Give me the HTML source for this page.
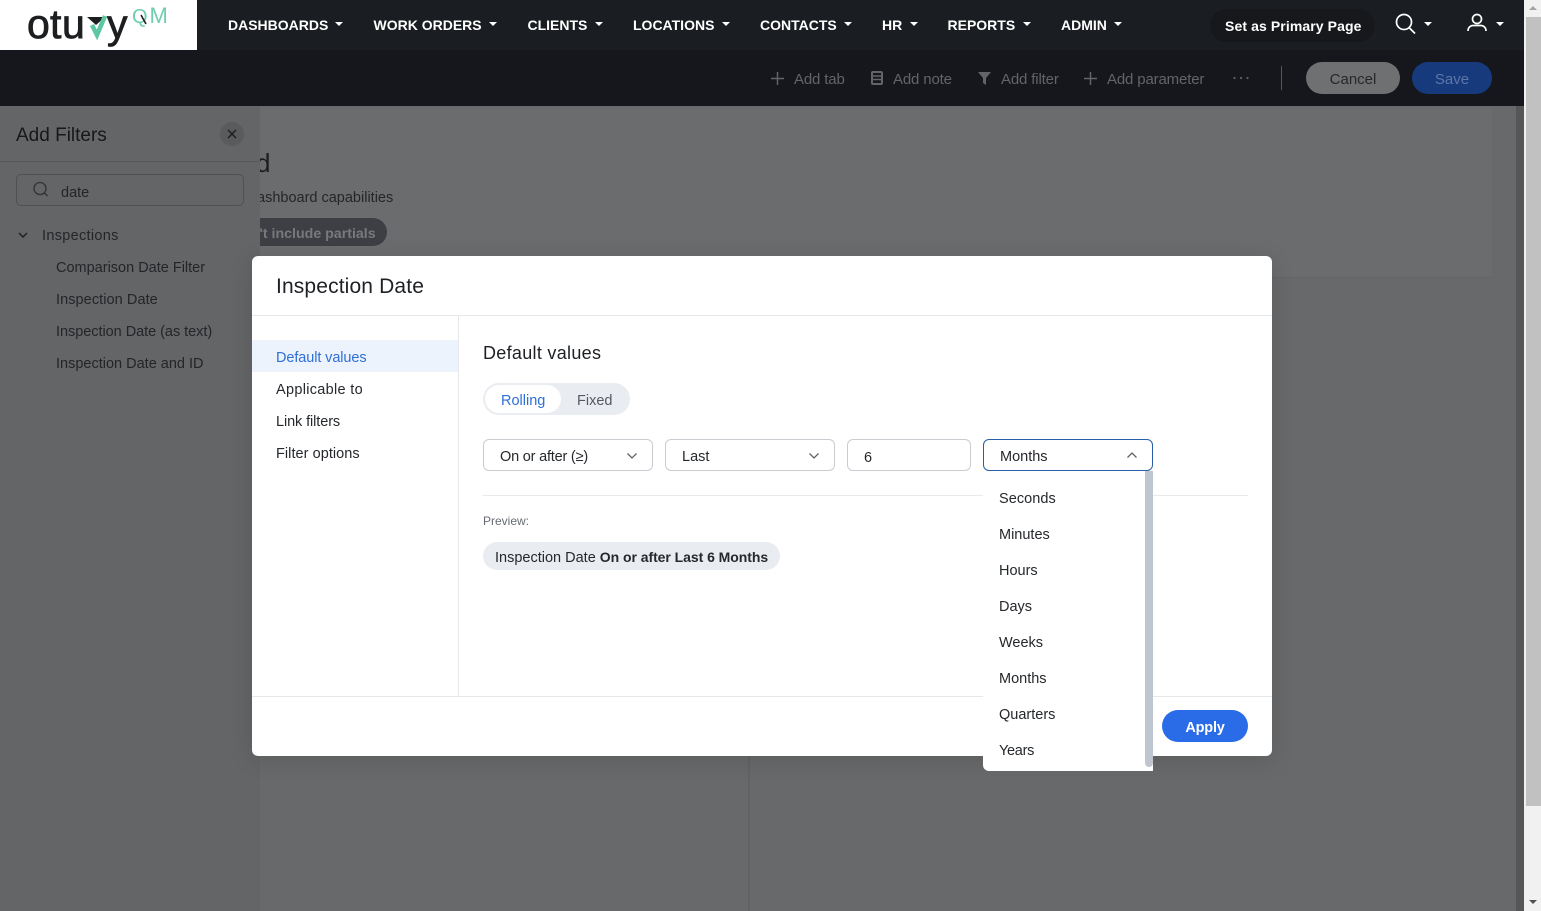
<!DOCTYPE html>
<html><head><meta charset="utf-8"><title>Inspection Date</title>
<style>
html,body{margin:0;padding:0;width:1541px;height:911px;overflow:hidden;background:#68696a;font-family:"Liberation Sans",sans-serif}
.a{position:absolute}
.t{position:absolute;white-space:nowrap;line-height:20px;height:20px}
.nav{font-weight:700;font-size:14px;color:#fff;top:15px}
.car{position:absolute;top:22px;width:0;height:0;border-left:4px solid transparent;border-right:4px solid transparent;border-top:4px solid #fff}
.tb{font-size:15px;color:#626467;top:70px;letter-spacing:-.15px}
.m{font-size:14.5px;color:#25282c}
.sb{font-size:14.5px;color:#232528}
.box{position:absolute;top:439px;height:30px;background:#fff;border:1px solid #c9cdd2;border-radius:6px}
.opt{font-size:14.5px;color:#25282c;left:999px}
.lg{position:absolute;white-space:nowrap;top:2px;height:44px;line-height:44px;font-size:41px;color:#1c1e20;-webkit-text-stroke:.8px #1c1e20}
svg{position:absolute;overflow:visible}
</style></head><body>
<!-- underlying page -->
<div class="a" style="left:260px;top:106px;width:1256px;height:805px;background:#68696a"></div>
<div class="a" style="left:260px;top:108px;width:1232px;height:169px;background:#6b6c6d;border-bottom:1px solid #646566"></div>
<div class="a" style="left:748px;top:756px;width:2px;height:155px;background:#626464"></div>
<div class="a" style="left:1516px;top:106px;width:8px;height:805px;background:#545657"></div>
<div class="t" style="left:256px;top:150px;font-size:26px;line-height:26px;height:26px;color:#1c1e21">d</div>
<div class="t" style="left:257px;top:188px;font-size:14.5px;color:#242629">ashboard capabilities</div>
<div class="a" style="left:240px;top:218px;width:147px;height:28px;border-radius:14px;background:#3d3f44"></div>
<div class="t" style="left:259.500px;top:224px;font-size:14.2px;font-weight:700;color:#77797c">'t include partials</div>
<!-- sidebar -->
<div class="a" style="left:0;top:106px;width:260px;height:805px;background:#646566"></div>
<div class="a" style="left:0;top:161px;width:260px;height:1px;background:#575859"></div>
<div class="t" style="left:16px;top:126px;font-size:19px;color:#16181b">Add Filters</div>
<div class="a" style="left:220px;top:122px;width:24px;height:24px;border-radius:12px;background:#5a5b5d"></div>
<svg style="left:227px;top:129px" width="10" height="10"><path d="M1 1L9 9M9 1L1 9" stroke="#1a1c1f" stroke-width="1.4"/></svg>
<div class="a" style="left:16px;top:174px;width:226px;height:30px;border:1px solid #4f5154;border-radius:5px"></div>
<svg style="left:32px;top:181px" width="18" height="18" fill="none" stroke="#303235" stroke-width="1.3"><circle cx="8" cy="7.5" r="6"/><path d="M12.5 12l3 3"/></svg>
<div class="t sb" style="left:61px;top:183px">date</div>
<svg style="left:18px;top:232px" width="10" height="6" fill="none" stroke="#1c1e21" stroke-width="1.4"><path d="M1 1l4 4 4-4"/></svg>
<div class="t sb" style="left:42px;top:226px;letter-spacing:.3px">Inspections</div>
<div class="t sb" style="left:56px;top:258px">Comparison Date Filter</div>
<div class="t sb" style="left:56px;top:290px;letter-spacing:.07px">Inspection Date</div>
<div class="t sb" style="left:56px;top:322px;letter-spacing:-.04px">Inspection Date (as text)</div>
<div class="t sb" style="left:56px;top:354px">Inspection Date and ID</div>
<!-- top nav -->
<div class="a" style="left:0;top:0;width:1524px;height:50px;background:#1a1d21"></div>
<div class="a" style="left:0;top:50px;width:1524px;height:56px;background:#15171c"></div>
<div class="a" style="left:0;top:0;width:197px;height:50px;background:#fff"></div>
<!-- logo -->
<div class="lg" style="left:27px">o</div>
<div class="lg" style="left:50px">t</div>
<div class="lg" style="left:62px">u</div>
<svg style="left:84px;top:14px" width="28" height="24"><path d="M3 3h18l-9 8z" fill="#1c1e20"/><path d="M8 11l5 10 8-19" fill="none" stroke="#5cc7a0" stroke-width="4.500"/></svg>
<div class="lg" style="left:107px">y</div>
<div class="t" style="left:132px;top:7px;font-size:20px;color:#6fcfad">Q</div>
<svg style="left:140px;top:14px" width="8" height="12"><path d="M1 1l5 9" stroke="#1c1e20" stroke-width="1.600"/></svg>
<div class="t" style="left:149.500px;top:6px;font-size:22px;color:#6fcfad">M</div>

<div class="t nav" style="left:228px">DASHBOARDS</div><div class="car" style="left:335px"></div>
<div class="t nav" style="left:373.500px">WORK ORDERS</div><div class="car" style="left:489px"></div>
<div class="t nav" style="left:527.500px">CLIENTS</div><div class="car" style="left:595px"></div>
<div class="t nav" style="left:633px">LOCATIONS</div><div class="car" style="left:722px"></div>
<div class="t nav" style="left:760px">CONTACTS</div><div class="car" style="left:844px"></div>
<div class="t nav" style="left:882px">HR</div><div class="car" style="left:910px"></div>
<div class="t nav" style="left:947.500px">REPORTS</div><div class="car" style="left:1023px"></div>
<div class="t nav" style="left:1061px">ADMIN</div><div class="car" style="left:1114px"></div>
<div class="a" style="left:1210px;top:9px;width:165px;height:33px;border-radius:17px;background:#16181c"></div>
<div class="t" style="left:1225px;top:16px;font-size:14px;font-weight:700;color:#fff;letter-spacing:.1px">Set as Primary Page</div>
<svg style="left:1394px;top:13px" width="24" height="22" fill="none" stroke="#fff" stroke-width="1.700"><circle cx="10" cy="9" r="7.500"/><path d="M15 14.500l6 6"/></svg>
<div class="car" style="left:1424px"></div>
<svg style="left:1466px;top:13px" width="22" height="20" fill="none" stroke="#fff" stroke-width="1.700"><circle cx="11" cy="6" r="4.500"/><path d="M2 18c0-4 3-5.500 5-5.500h8c2 0 5 1.500 5 5.500"/></svg>
<div class="car" style="left:1496px"></div>

<svg style="left:771px;top:72px" width="13" height="13"><path d="M6.500 0v13M0 6.500h13" stroke="#626467" stroke-width="1.500"/></svg>
<div class="t tb" style="left:794px">Add tab</div>
<svg style="left:871px;top:71px" width="12" height="14"><rect x="1" y="1" width="10" height="12" rx="1" fill="none" stroke="#626467" stroke-width="2"/><path d="M2 5h8M2 8.500h8" stroke="#626467" stroke-width="1.500"/></svg>
<div class="t tb" style="left:893px">Add note</div>
<svg style="left:978px;top:72px" width="14" height="13"><path d="M0 0h13L8 6v7L5 11V6z" fill="#626467"/></svg>
<div class="t tb" style="left:1001px">Add filter</div>
<svg style="left:1084px;top:72px" width="13" height="13"><path d="M6.500 0v13M0 6.500h13" stroke="#626467" stroke-width="1.500"/></svg>
<div class="t tb" style="left:1107px">Add parameter</div>
<svg style="left:1233px;top:76px" width="18" height="4" fill="#5f6164"><circle cx="1.500" cy="2" r="1.100"/><circle cx="8" cy="2" r="1.100"/><circle cx="14.500" cy="2" r="1.100"/></svg>
<div class="a" style="left:1281px;top:66px;width:1px;height:24px;background:#55575a"></div>
<div class="a" style="left:1306px;top:62px;width:94px;height:32px;border-radius:16px;background:#6f7072"></div>
<div class="t" style="left:1306px;width:94px;text-align:center;top:70px;font-size:15px;color:#26282b">Cancel</div>
<div class="a" style="left:1412px;top:62px;width:80px;height:32px;border-radius:16px;background:#163a7c"></div>
<div class="t" style="left:1412px;width:80px;text-align:center;top:70px;font-size:15px;color:#5d76a6">Save</div>
<!-- scrollbar -->
<div class="a" style="left:1524px;top:0;width:17px;height:911px;background:#f1f1f1"></div>
<div class="a" style="left:1526px;top:17px;width:15px;height:789px;background:#c1c1c1"></div>
<div class="a" style="left:1529px;top:6px;width:0;height:0;border-left:4px solid transparent;border-right:4px solid transparent;border-bottom:4px solid #a3a3a3"></div>
<div class="a" style="left:1529px;top:900px;width:0;height:0;border-left:4px solid transparent;border-right:4px solid transparent;border-top:4px solid #505050"></div>
<!-- modal -->
<div class="a" style="left:252px;top:256px;width:1020px;height:500px;background:#fff;border-radius:6px;box-shadow:0 4px 24px rgba(0,0,0,.12)"></div>
<div class="a" style="left:252px;top:315px;width:1020px;height:1px;background:#e6e8eb"></div>
<div class="a" style="left:252px;top:696px;width:1020px;height:1px;background:#e6e8eb"></div>
<div class="a" style="left:458px;top:316px;width:1px;height:380px;background:#e6e8eb"></div>
<div class="t" style="left:276px;top:277px;font-size:21px;color:#1d2024;letter-spacing:.14px">Inspection Date</div>
<div class="a" style="left:252px;top:340px;width:206px;height:32px;background:#edf3fc"></div>
<div class="t m" style="left:276px;top:348px;color:#2f6fd6;letter-spacing:-.1px">Default values</div>
<div class="t m" style="left:276px;top:380px;letter-spacing:.3px">Applicable to</div>
<div class="t m" style="left:276px;top:412px;letter-spacing:-.1px">Link filters</div>
<div class="t m" style="left:276px;top:444px;letter-spacing:.05px">Filter options</div>
<div class="t" style="left:483px;top:343px;font-size:18px;color:#1d2024;letter-spacing:.3px">Default values</div>
<div class="a" style="left:483px;top:383px;width:147px;height:32px;border-radius:16px;background:#e9ecf0"></div>
<div class="a" style="left:485px;top:385px;width:76px;height:28px;border-radius:14px;background:#fff"></div>
<div class="t m" style="left:501px;top:391px;color:#2f6fd6">Rolling</div>
<div class="t m" style="left:577px;top:391px;color:#555a61">Fixed</div>
<div class="box" style="left:483px;width:168px"></div>
<div class="t m" style="left:500px;top:447px;letter-spacing:-.2px">On or after (≥)</div>
<svg style="left:627px;top:453px" width="10" height="6" fill="none" stroke="#5f6368" stroke-width="1.300"><path d="M.5.500l4.500 4.500L9.500.500"/></svg>
<div class="box" style="left:665px;width:168px"></div>
<div class="t m" style="left:682px;top:447px">Last</div>
<svg style="left:809px;top:453px" width="10" height="6" fill="none" stroke="#5f6368" stroke-width="1.300"><path d="M.5.500l4.500 4.500L9.500.500"/></svg>
<div class="box" style="left:847px;width:122px"></div>
<div class="t m" style="left:864px;top:448px">6</div>
<div class="box" style="left:983px;width:168px;border-color:#2a5ea8"></div>
<div class="t m" style="left:1000px;top:447px">Months</div>
<svg style="left:1127px;top:452px" width="10" height="6" fill="none" stroke="#5f6368" stroke-width="1.300"><path d="M.5 5.500L5 1l4.500 4.500"/></svg>
<div class="a" style="left:483px;top:495px;width:765px;height:1px;background:#e8eaed"></div>
<div class="t" style="left:483px;top:511px;font-size:12px;color:#666b72">Preview:</div>
<div class="a" style="left:483px;top:542px;width:297px;height:28px;border-radius:14px;background:#e9ecf0"></div>
<div class="t m" style="left:495px;top:547px">Inspection Date <span style="font-weight:700;font-size:14px;letter-spacing:-.05px">On or after Last 6 Months</span></div>
<div class="a" style="left:1162px;top:710px;width:86px;height:32px;border-radius:16px;background:#2a6ce8"></div>
<div class="t" style="left:1162px;width:86px;text-align:center;top:718px;font-size:14.500px;font-weight:700;color:#fff;letter-spacing:-.2px">Apply</div>
<!-- dropdown -->
<div class="a" style="left:983px;top:471px;width:170px;height:300px;background:#fff;border-radius:0 0 0 6px"></div>
<div class="a" style="left:1145px;top:471px;width:8px;height:296px;background:#c0c6d0;border-radius:0 0 4px 4px"></div>
<div class="t opt" style="top:489px;letter-spacing:.05px">Seconds</div>
<div class="t opt" style="top:525px">Minutes</div>
<div class="t opt" style="top:561px">Hours</div>
<div class="t opt" style="top:597px">Days</div>
<div class="t opt" style="top:633px">Weeks</div>
<div class="t opt" style="top:669px">Months</div>
<div class="t opt" style="top:705px">Quarters</div>
<div class="t opt" style="top:741px;letter-spacing:-.3px">Years</div>
</body></html>
